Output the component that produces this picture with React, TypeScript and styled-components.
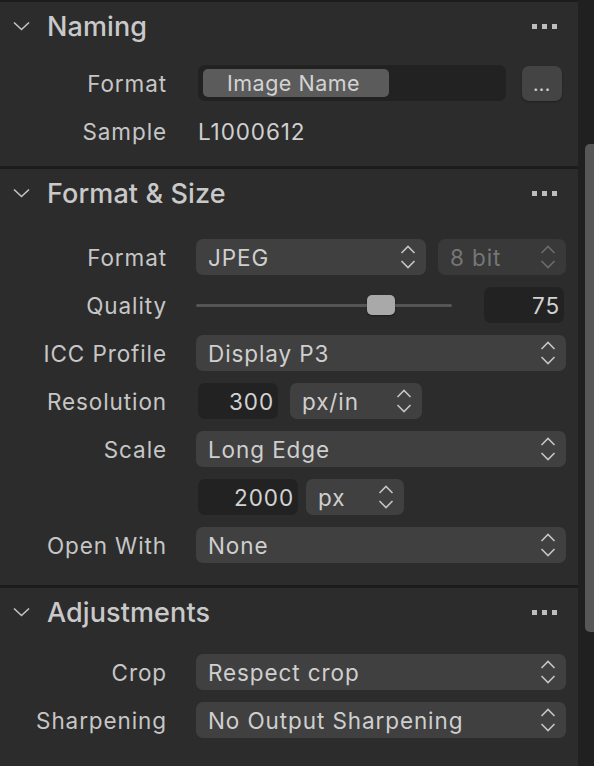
import styled, { createGlobalStyle } from "styled-components";

const GlobalStyle = createGlobalStyle`
  html, body {
    margin: 0;
    padding: 0;
    background: #1f1f1f;
  }
  body {
    font-family: "Inter", "Noto Sans", sans-serif;
    -webkit-font-smoothing: antialiased;
  }
`;

const textSize = "22.5px";
const tracking = "0.9px";

const Screen = styled.div`
  display: flex;
  width: 594px;
  height: 766px;
  overflow: hidden;
  background: #1f1f1f;
`;

const Panel = styled.div`
  width: 578px;
  display: flex;
  flex-direction: column;
  gap: 3px;
  padding-top: 2px;
  background: #1c1c1c;
`;

const Gutter = styled.div`
  flex: 1;
  display: flex;
  flex-direction: column;
  align-items: flex-end;
  padding-top: 144px;
  background: #202020;
`;

const Thumb = styled.div`
  width: 9px;
  height: 488px;
  background: #575757;
  border-radius: 5px 0 0 5px;
`;

const Section = styled.section<{ $top: number; $bottom: number }>`
  background: #2c2c2c;
  padding: 0 12px ${(p) => p.$bottom}px 0;

  & > div:last-child {
    margin-top: ${(p) => p.$top}px;
  }
`;

const Header = styled.div`
  display: flex;
  align-items: center;
  height: 48px;
  padding-left: 13px;
`;

const Title = styled.h2`
  flex: 1;
  margin: 0 0 0 17px;
  font-size: 27px;
  font-weight: 500;
  color: #c9c9c9;
  letter-spacing: 0.1px;
`;

const Dots = styled.div`
  display: flex;
  gap: 5px;
  margin-right: 9px;

  span {
    width: 5px;
    height: 5px;
    background: #bdbdbd;
  }
`;

const Body = styled.div`
  display: grid;
  grid-template-columns: 166px 1fr;
  column-gap: 30px;
  row-gap: 12px;
  align-items: center;
`;

const Label = styled.div`
  text-align: right;
  font-size: ${textSize};
  color: #c6c6c6;
  letter-spacing: ${tracking};
  margin-right: -1px;
`;

const Controls = styled.div<{ $gap?: number }>`
  display: flex;
  align-items: center;
  height: 36px;
  gap: ${(p) => p.$gap ?? 12}px;
`;

const PopUp = styled.div<{ $width?: number; $disabled?: boolean }>`
  display: flex;
  align-items: center;
  justify-content: space-between;
  height: 36px;
  box-sizing: border-box;
  padding: 0 10px 0 12px;
  border-radius: 7px;
  background: ${(p) => (p.$disabled ? "#393939" : "#404040")};
  color: ${(p) => (p.$disabled ? "#767676" : "#cfcfcf")};
  font-size: ${textSize};
  letter-spacing: ${tracking};
  ${(p) => (p.$width ? `width: ${p.$width}px;` : "flex: 1;")}
`;

const Field = styled.div<{ $width: number; $align?: string }>`
  display: flex;
  align-items: center;
  justify-content: ${(p) => p.$align ?? "flex-end"};
  width: ${(p) => p.$width}px;
  height: 36px;
  box-sizing: border-box;
  padding: 0 4px;
  margin-left: 2px;
  border-radius: 7px;
  background: #222222;
  color: #d2d2d2;
  font-size: ${textSize};
  letter-spacing: ${tracking};
`;

const Token = styled.div`
  display: flex;
  align-items: center;
  width: 186px;
  height: 28px;
  box-sizing: border-box;
  padding-left: 24px;
  margin-left: 1px;
  border-radius: 5px;
  background: #5b5b5b;
  color: #d3d3d3;
  font-size: 21.5px;
  letter-spacing: 0.5px;
`;

const SmallButton = styled.div`
  display: flex;
  align-items: flex-end;
  justify-content: center;
  width: 40px;
  height: 35px;
  box-sizing: border-box;
  padding-bottom: 8px;
  border-radius: 7px;
  background: #444444;
  color: #cfcfcf;
  font-size: 15px;
  font-weight: 700;
  line-height: 1;
  letter-spacing: 0.8px;
  box-shadow: 0 1px 2px rgba(0, 0, 0, 0.3);
`;

const Value = styled.div`
  font-size: ${textSize};
  letter-spacing: ${tracking};
  color: #cfcfcf;
  padding-left: 2px;
`;

const Slider = styled.div`
  width: 256px;
  height: 36px;
  display: flex;
  align-items: center;
`;

const Track = styled.div`
  flex: 1;
  height: 3px;
  border-radius: 2px;
  background: #555555;
  display: flex;
  align-items: center;
`;

const Knob = styled.div`
  width: 28px;
  height: 20px;
  margin-left: 171px;
  border-radius: 5px;
  background: #a9a9a9;
  box-shadow: 0 1px 2px rgba(0, 0, 0, 0.4);
`;

function Chevron() {
  return (
    <svg width="17" height="10" viewBox="0 0 17 10" fill="none">
      <path d="M1 1.5 L8.5 8.5 L16 1.5" stroke="#c4c4c4" strokeWidth="1.6" />
    </svg>
  );
}

function Stepper({ dim }: { dim?: boolean }) {
  const c = dim ? "#6c6c6c" : "#c4c4c4";
  return (
    <svg width="16" height="24" viewBox="0 0 16 24" fill="none">
      <path d="M1.5 8 L8 1.5 L14.5 8" stroke={c} strokeWidth="1.6" />
      <path d="M1.5 16 L8 22.5 L14.5 16" stroke={c} strokeWidth="1.6" />
    </svg>
  );
}

function More() {
  return (
    <Dots>
      <span />
      <span />
      <span />
    </Dots>
  );
}

function Select({
  value,
  width,
  disabled,
}: {
  value: string;
  width?: number;
  disabled?: boolean;
}) {
  return (
    <PopUp $width={width} $disabled={disabled}>
      <span>{value}</span>
      <Stepper dim={disabled} />
    </PopUp>
  );
}

function SectionHeader({ title }: { title: string }) {
  return (
    <Header>
      <Chevron />
      <Title>{title}</Title>
      <More />
    </Header>
  );
}

export default function App() {
  return (
    <Screen>
      <GlobalStyle />
      <Panel>
        <Section $top={15} $bottom={17}>
          <SectionHeader title="Naming" />
          <Body>
            <Label>Format</Label>
            <Controls $gap={16}>
              <Field $width={308} $align="flex-start">
                <Token>Image Name</Token>
              </Field>
              <SmallButton>...</SmallButton>
            </Controls>
            <Label>Sample</Label>
            <Controls>
              <Value>L1000612</Value>
            </Controls>
          </Body>
        </Section>

        <Section $top={22} $bottom={22}>
          <SectionHeader title="Format &amp; Size" />
          <Body>
            <Label>Format</Label>
            <Controls>
              <Select value="JPEG" width={230} />
              <Select value="8 bit" disabled />
            </Controls>
            <Label>Quality</Label>
            <Controls $gap={30}>
              <Slider>
                <Track>
                  <Knob />
                </Track>
              </Slider>
              <Field $width={80}>75</Field>
            </Controls>
            <Label>ICC Profile</Label>
            <Controls>
              <Select value="Display P3" />
            </Controls>
            <Label>Resolution</Label>
            <Controls>
              <Field $width={80}>300</Field>
              <Select value="px/in" width={132} />
            </Controls>
            <Label>Scale</Label>
            <Controls>
              <Select value="Long Edge" />
            </Controls>
            <Label />
            <Controls $gap={8}>
              <Field $width={100}>2000</Field>
              <Select value="px" width={98} />
            </Controls>
            <Label>Open With</Label>
            <Controls>
              <Select value="None" />
            </Controls>
          </Body>
        </Section>

        <Section $top={18} $bottom={40}>
          <SectionHeader title="Adjustments" />
          <Body>
            <Label>Crop</Label>
            <Controls>
              <Select value="Respect crop" />
            </Controls>
            <Label>Sharpening</Label>
            <Controls>
              <Select value="No Output Sharpening" />
            </Controls>
          </Body>
        </Section>
      </Panel>
      <Gutter>
        <Thumb />
      </Gutter>
    </Screen>
  );
}
